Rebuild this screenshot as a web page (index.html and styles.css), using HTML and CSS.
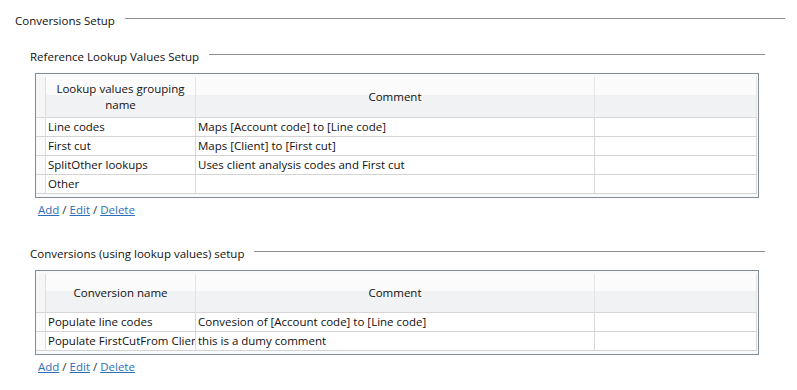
FILE: index.html
```html
<!DOCTYPE html>
<html>
<head>
<meta charset="utf-8">
<link rel="stylesheet" href="styles.css">
</head>
<body>
<div class="page">
  <section class="group outer">
    <div class="gtitle"><span class="gtext">Conversions Setup</span><i class="rule"></i></div>
    <section class="group inner">
      <div class="gtitle"><span class="gtext">Reference Lookup Values Setup</span><i class="rule"></i></div>
      <div class="gridbox">
        <div class="grid">
          <div class="hc rh"></div>
          <div class="hc">Lookup values grouping<br>name</div>
          <div class="hc">Comment</div>
          <div class="hc"></div>

          <div class="c rh"></div><div class="c">Line codes</div><div class="c">Maps [Account code] to [Line code]</div><div class="c"></div>
          <div class="c rh"></div><div class="c">First cut</div><div class="c">Maps [Client] to [First cut]</div><div class="c"></div>
          <div class="c rh"></div><div class="c">SplitOther lookups</div><div class="c">Uses client analysis codes and First cut</div><div class="c"></div>
          <div class="c rh"></div><div class="c">Other</div><div class="c"></div><div class="c"></div>
        </div>
      </div>
      <div class="actions"><a href="#">Add</a> / <a href="#">Edit</a> / <a href="#">Delete</a></div>
    </section>
    <section class="group inner second">
      <div class="gtitle"><span class="gtext">Conversions (using lookup values) setup</span><i class="rule"></i></div>
      <div class="gridbox">
        <div class="grid short">
          <div class="hc rh"></div>
          <div class="hc">Conversion name</div>
          <div class="hc">Comment</div>
          <div class="hc"></div>

          <div class="c rh"></div><div class="c">Populate line codes</div><div class="c">Convesion of [Account code] to [Line code]</div><div class="c"></div>
          <div class="c rh"></div><div class="c">Populate FirstCutFrom Client</div><div class="c">this is a dumy comment</div><div class="c"></div>
        </div>
      </div>
      <div class="actions"><a href="#">Add</a> / <a href="#">Edit</a> / <a href="#">Delete</a></div>
    </section>
  </section>
</div>
</body>
</html>
```

FILE: styles.css
```css
html, body {
  margin: 0;
  padding: 0;
  background: #ffffff;
}

body {
  font-family: "Open Sans", "Noto Sans", sans-serif;
  font-size: 11.5px;
  color: #111111;
}

.page {
  padding: 13px 12px 0 15px;
}

.gtitle {
  display: flex;
  align-items: flex-start;
  line-height: 16px;
  height: 16px;
}

.gtext {
  white-space: nowrap;
}

.rule {
  flex: 1;
  margin-left: 10px;
  margin-top: 5px;
  border-top: 1px solid #8d8d8d;
}

.inner {
  margin-left: 15px;
  margin-right: 20px;
  margin-top: 20px;
}

.inner.second {
  margin-top: 28px;
}

.gridbox {
  margin-top: 8px;
  margin-left: 5px;
  margin-right: 6px;
  border: 1px solid #828b96;
  padding: 3px 2px 3px 0;
  background: #f7f9fb;
}

.grid {
  display: grid;
  grid-template-columns: 10px 150px 399px 162px;
  background: #ffffff;
}

.hc, .c {
  box-sizing: border-box;
  border-right: 1px solid #d9d9d9;
  border-bottom: 1px solid #d4d4d4;
  white-space: nowrap;
  overflow: hidden;
}

.hc {
  height: 41px;
  display: flex;
  align-items: center;
  justify-content: center;
  text-align: center;
  line-height: 16px;
  background: linear-gradient(#fcfcfc 0, #fbfbfb 44%, #f1f2f4 44%, #f1f2f4 100%);
  border-right-color: #e4e4e4;
  border-bottom-color: #d6d6d6;
}

.short .hc {
  height: 39px;
}

.c {
  height: 19px;
  line-height: 18px;
  padding-left: 2px;
}

.rh {
  padding: 0;
  background: #f6f6f6;
  border-right-color: #dedede;
}

.c.rh {
  background: #fbfbfb;
}

.actions {
  margin-left: 8px;
  margin-top: 4px;
  line-height: 16px;
  color: #333333;
}

.actions a {
  color: #2f6fba;
  text-decoration: underline;
}
```
